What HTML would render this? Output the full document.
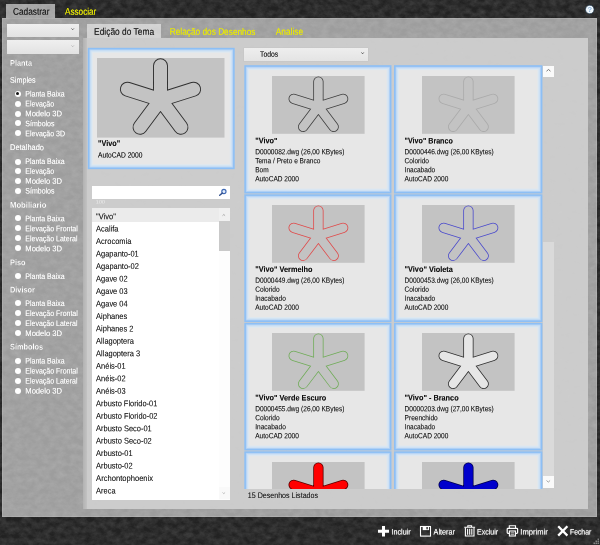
<!DOCTYPE html>
<html lang="pt-BR"><head><meta charset="utf-8"><title>Cadastrar</title>
<style>
html,body{margin:0;padding:0;background:#2b2b2b;}
#root{opacity:.999;position:relative;width:600px;height:545px;overflow:hidden;background:#2b2b2b;font-family:"Liberation Sans", sans-serif;}
#root div,#root svg,#root span.t{position:absolute;}
#root span.t{left:0;top:0;white-space:pre;display:block;transform-origin:0 0;text-shadow:0 0 .5px rgba(0,0,0,.4);}
#root svg{overflow:visible;}
</style></head><body>
<div id="root">
<svg style="left:0;top:0" width="600" height="545"><filter id="tx" x="0" y="0" width="100%" height="100%" color-interpolation-filters="sRGB"><feTurbulence type="fractalNoise" baseFrequency="0.14 0.18" numOctaves="5" seed="7"/><feColorMatrix type="matrix" values="0 0 0 0 0.27  0 0 0 0 0.27  0 0 0 0 0.27  1.3 0 0 0 -0.33"/></filter><rect width="600" height="545" fill="#222"/><rect width="600" height="545" filter="url(#tx)"/></svg>
<div style="left:2px;top:17.5px;width:595.3px;height:499px;background:rgba(255,255,255,0.555);box-shadow:inset 0 0 0 1px rgba(255,255,255,.12)"></div>
<div style="left:5.5px;top:4px;width:49px;height:13.5px;background:rgba(255,255,255,0.58);"></div>
<span class="t" style="font-size:9.6px;line-height:12.5px;color:#1a1a1a;transform:translate(13.00px,5.72px) scaleX(0.866) rotate(.05deg);text-shadow:0 0 .5px rgba(0,0,0,.5);">Cadastrar</span>
<span class="t" style="font-size:9.6px;line-height:12.5px;color:#eded00;transform:translate(65.00px,5.62px) scaleX(0.851) rotate(.05deg);text-shadow:0 0 .6px rgba(240,240,0,.6);">Associar</span>
<svg style="left:584px;top:4px" width="12" height="12" viewBox="0 0 12 12"><circle cx="5.75" cy="5.5" r="4.3" fill="#eef6fc" stroke="#1d3348" stroke-width=".7"/><text x="5.75" y="8.3" font-size="7.5" font-weight="700" text-anchor="middle" fill="#8fb4d8" font-family='"Liberation Sans", sans-serif'>?</text></svg>
<div style="left:7px;top:23.5px;width:71.8px;height:13.5px;background:linear-gradient(#efefef,#e2e2e2);"></div>
<svg style="left:71px;top:28.3px" width="3.4" height="2.2" viewBox="0 0 3.4 2.2"><path d="M0.5 0.5L1.7 1.7000000000000002L2.9 0.5" fill="none" stroke="#555" stroke-width="0.9"/></svg>
<div style="left:7px;top:39.8px;width:71.8px;height:14.2px;background:linear-gradient(#efefef,#e2e2e2);"></div>
<svg style="left:71px;top:45px" width="3.4" height="2.2" viewBox="0 0 3.4 2.2"><path d="M0.5 0.5L1.7 1.7000000000000002L2.9 0.5" fill="none" stroke="#b4b4b4" stroke-width="0.9"/></svg>
<span class="t" style="font-size:8.2px;line-height:10.7px;color:#fff;font-weight:700;transform:translate(10.00px,58.70px) scaleX(0.895) rotate(.05deg);">Planta</span>
<span class="t" style="font-size:8.2px;line-height:10.7px;color:#fff;transform:translate(10.00px,75.70px) scaleX(0.879) rotate(.05deg);text-shadow:0 0 .6px rgba(255,255,255,.55);">Simples</span>
<div style="left:14.6px;top:90.6px;width:6px;height:6px;border-radius:50%;background:#fff"></div>
<div style="left:16.1px;top:92.1px;width:3px;height:3px;border-radius:50%;background:#111"></div>
<span class="t" style="font-size:8.0px;line-height:10.4px;color:#fff;transform:translate(25.30px,89.42px) scaleX(0.875) rotate(.05deg);text-shadow:0 0 .6px rgba(255,255,255,.55);">Planta Baixa</span>
<div style="left:14.6px;top:100.5px;width:6px;height:6px;border-radius:50%;background:#fff"></div>
<span class="t" style="font-size:8.0px;line-height:10.4px;color:#fff;transform:translate(25.30px,99.37px) scaleX(0.875) rotate(.05deg);text-shadow:0 0 .6px rgba(255,255,255,.55);">Elevação</span>
<div style="left:14.6px;top:110.5px;width:6px;height:6px;border-radius:50%;background:#fff"></div>
<span class="t" style="font-size:8.0px;line-height:10.4px;color:#fff;transform:translate(25.30px,109.32px) scaleX(0.951) rotate(.05deg);text-shadow:0 0 .6px rgba(255,255,255,.55);">Modelo 3D</span>
<div style="left:14.6px;top:120.4px;width:6px;height:6px;border-radius:50%;background:#fff"></div>
<span class="t" style="font-size:8.0px;line-height:10.4px;color:#fff;transform:translate(25.30px,119.27px) scaleX(0.875) rotate(.05deg);text-shadow:0 0 .6px rgba(255,255,255,.55);">Símbolos</span>
<div style="left:14.6px;top:130.4px;width:6px;height:6px;border-radius:50%;background:#fff"></div>
<span class="t" style="font-size:8.0px;line-height:10.4px;color:#fff;transform:translate(25.30px,129.22px) scaleX(0.875) rotate(.05deg);text-shadow:0 0 .6px rgba(255,255,255,.55);">Elevação 3D</span>
<span class="t" style="font-size:8.2px;line-height:10.7px;color:#fff;transform:translate(10.00px,143.10px) scaleX(0.911) rotate(.05deg);text-shadow:0 0 .6px rgba(255,255,255,.55);">Detalhado</span>
<div style="left:14.6px;top:158.5px;width:6px;height:6px;border-radius:50%;background:#fff"></div>
<span class="t" style="font-size:8.0px;line-height:10.4px;color:#fff;transform:translate(25.30px,156.92px) scaleX(0.875) rotate(.05deg);text-shadow:0 0 .6px rgba(255,255,255,.55);">Planta Baixa</span>
<div style="left:14.6px;top:168.3px;width:6px;height:6px;border-radius:50%;background:#fff"></div>
<span class="t" style="font-size:8.0px;line-height:10.4px;color:#fff;transform:translate(25.30px,166.77px) scaleX(0.875) rotate(.05deg);text-shadow:0 0 .6px rgba(255,255,255,.55);">Elevação</span>
<div style="left:14.6px;top:178.2px;width:6px;height:6px;border-radius:50%;background:#fff"></div>
<span class="t" style="font-size:8.0px;line-height:10.4px;color:#fff;transform:translate(25.30px,176.62px) scaleX(0.951) rotate(.05deg);text-shadow:0 0 .6px rgba(255,255,255,.55);">Modelo 3D</span>
<div style="left:14.6px;top:188.1px;width:6px;height:6px;border-radius:50%;background:#fff"></div>
<span class="t" style="font-size:8.0px;line-height:10.4px;color:#fff;transform:translate(25.30px,186.47px) scaleX(0.875) rotate(.05deg);text-shadow:0 0 .6px rgba(255,255,255,.55);">Símbolos</span>
<span class="t" style="font-size:8.2px;line-height:10.7px;color:#fff;font-weight:700;transform:translate(10.00px,200.80px) scaleX(0.941) rotate(.05deg);">Mobiliario</span>
<div style="left:14.6px;top:215.4px;width:6px;height:6px;border-radius:50%;background:#fff"></div>
<span class="t" style="font-size:8.0px;line-height:10.4px;color:#fff;transform:translate(25.30px,214.22px) scaleX(0.875) rotate(.05deg);text-shadow:0 0 .6px rgba(255,255,255,.55);">Planta Baixa</span>
<div style="left:14.6px;top:225.4px;width:6px;height:6px;border-radius:50%;background:#fff"></div>
<span class="t" style="font-size:8.0px;line-height:10.4px;color:#fff;transform:translate(25.30px,224.22px) scaleX(0.875) rotate(.05deg);text-shadow:0 0 .6px rgba(255,255,255,.55);">Elevação Frontal</span>
<div style="left:14.6px;top:235.4px;width:6px;height:6px;border-radius:50%;background:#fff"></div>
<span class="t" style="font-size:8.0px;line-height:10.4px;color:#fff;transform:translate(25.30px,234.22px) scaleX(0.875) rotate(.05deg);text-shadow:0 0 .6px rgba(255,255,255,.55);">Elevação Lateral</span>
<div style="left:14.6px;top:245.4px;width:6px;height:6px;border-radius:50%;background:#fff"></div>
<span class="t" style="font-size:8.0px;line-height:10.4px;color:#fff;transform:translate(25.30px,244.22px) scaleX(0.951) rotate(.05deg);text-shadow:0 0 .6px rgba(255,255,255,.55);">Modelo 3D</span>
<span class="t" style="font-size:8.2px;line-height:10.7px;color:#fff;font-weight:700;transform:translate(10.00px,258.20px) scaleX(0.900) rotate(.05deg);">Piso</span>
<div style="left:14.6px;top:273.2px;width:6px;height:6px;border-radius:50%;background:#fff"></div>
<span class="t" style="font-size:8.0px;line-height:10.4px;color:#fff;transform:translate(25.30px,272.02px) scaleX(0.875) rotate(.05deg);text-shadow:0 0 .6px rgba(255,255,255,.55);">Planta Baixa</span>
<span class="t" style="font-size:8.2px;line-height:10.7px;color:#fff;font-weight:700;transform:translate(10.00px,285.60px) scaleX(0.900) rotate(.05deg);">Divisor</span>
<div style="left:14.6px;top:300.2px;width:6px;height:6px;border-radius:50%;background:#fff"></div>
<span class="t" style="font-size:8.0px;line-height:10.4px;color:#fff;transform:translate(25.30px,299.02px) scaleX(0.875) rotate(.05deg);text-shadow:0 0 .6px rgba(255,255,255,.55);">Planta Baixa</span>
<div style="left:14.6px;top:310.2px;width:6px;height:6px;border-radius:50%;background:#fff"></div>
<span class="t" style="font-size:8.0px;line-height:10.4px;color:#fff;transform:translate(25.30px,309.02px) scaleX(0.875) rotate(.05deg);text-shadow:0 0 .6px rgba(255,255,255,.55);">Elevação Frontal</span>
<div style="left:14.6px;top:320.2px;width:6px;height:6px;border-radius:50%;background:#fff"></div>
<span class="t" style="font-size:8.0px;line-height:10.4px;color:#fff;transform:translate(25.30px,319.02px) scaleX(0.875) rotate(.05deg);text-shadow:0 0 .6px rgba(255,255,255,.55);">Elevação Lateral</span>
<div style="left:14.6px;top:330.2px;width:6px;height:6px;border-radius:50%;background:#fff"></div>
<span class="t" style="font-size:8.0px;line-height:10.4px;color:#fff;transform:translate(25.30px,329.02px) scaleX(0.951) rotate(.05deg);text-shadow:0 0 .6px rgba(255,255,255,.55);">Modelo 3D</span>
<span class="t" style="font-size:8.2px;line-height:10.7px;color:#fff;font-weight:700;transform:translate(10.00px,342.60px) scaleX(0.900) rotate(.05deg);">Símbolos</span>
<div style="left:14.6px;top:357.7px;width:6px;height:6px;border-radius:50%;background:#fff"></div>
<span class="t" style="font-size:8.0px;line-height:10.4px;color:#fff;transform:translate(25.30px,356.52px) scaleX(0.875) rotate(.05deg);text-shadow:0 0 .6px rgba(255,255,255,.55);">Planta Baixa</span>
<div style="left:14.6px;top:367.7px;width:6px;height:6px;border-radius:50%;background:#fff"></div>
<span class="t" style="font-size:8.0px;line-height:10.4px;color:#fff;transform:translate(25.30px,366.52px) scaleX(0.875) rotate(.05deg);text-shadow:0 0 .6px rgba(255,255,255,.55);">Elevação Frontal</span>
<div style="left:14.6px;top:377.7px;width:6px;height:6px;border-radius:50%;background:#fff"></div>
<span class="t" style="font-size:8.0px;line-height:10.4px;color:#fff;transform:translate(25.30px,376.52px) scaleX(0.875) rotate(.05deg);text-shadow:0 0 .6px rgba(255,255,255,.55);">Elevação Lateral</span>
<div style="left:14.6px;top:387.7px;width:6px;height:6px;border-radius:50%;background:#fff"></div>
<span class="t" style="font-size:8.0px;line-height:10.4px;color:#fff;transform:translate(25.30px,386.52px) scaleX(0.951) rotate(.05deg);text-shadow:0 0 .6px rgba(255,255,255,.55);">Modelo 3D</span>
<div style="left:82.7px;top:37.8px;width:505.5px;height:471.5px;background:rgba(208,208,208,0.9);"></div>
<div style="left:82.7px;top:37.8px;width:4.3px;height:471.5px;background:linear-gradient(90deg,rgba(0,0,0,.13),rgba(0,0,0,.05));"></div>
<div style="left:86.5px;top:24px;width:74px;height:14px;background:rgba(255,255,255,0.52);"></div>
<span class="t" style="font-size:9.6px;line-height:12.5px;color:#1a1a1a;transform:translate(94.10px,25.82px) scaleX(0.874) rotate(.05deg);text-shadow:0 0 .5px rgba(0,0,0,.45);">Edição do Tema</span>
<span class="t" style="font-size:9.6px;line-height:12.5px;color:#eaea00;transform:translate(169.70px,25.82px) scaleX(0.865) rotate(.05deg);text-shadow:0 0 .6px rgba(235,235,0,.6);">Relação dos Desenhos</span>
<span class="t" style="font-size:9.6px;line-height:12.5px;color:#eaea00;transform:translate(275.80px,25.82px) scaleX(0.868) rotate(.05deg);text-shadow:0 0 .6px rgba(235,235,0,.6);">Analise</span>
<svg style="left:0;top:0" width="1" height="1"><rect x="87.80" y="47.80" width="146.90" height="121.40" fill="#8dbff5"/><rect x="89.40" y="49.40" width="143.70" height="118.20" fill="#b3d2f5"/><rect x="90.30" y="50.30" width="141.90" height="116.40" fill="#cfe1f4"/><rect x="91.60" y="51.60" width="139.30" height="113.80" fill="#dde8f1"/><rect x="92.70" y="52.70" width="137.10" height="111.60" fill="#e7e7e7"/></svg>
<svg style="left:97.1px;top:58.2px" width="127.5" height="79.6" viewBox="0 0 127.5 79.6"><rect width="127.5" height="79.6" fill="#c3c3c3"/><path d="M63.50 41.75L63.50 7.75M63.50 41.75L96.61 31.24M63.50 41.75L83.96 69.26M63.50 41.75L43.04 69.26M63.50 41.75L30.39 31.24" stroke="#303030" stroke-width="14.95" stroke-linecap="round" fill="none"/><path d="M63.50 41.75L63.50 7.75M63.50 41.75L96.61 31.24M63.50 41.75L83.96 69.26M63.50 41.75L43.04 69.26M63.50 41.75L30.39 31.24" stroke="#c3c3c3" stroke-width="13.05" stroke-linecap="round" fill="none"/></svg>
<span class="t" style="font-size:8.2px;line-height:10.7px;color:#111;font-weight:700;transform:translate(98.00px,138.90px) scaleX(0.887) rotate(.05deg);">"Vivo"</span>
<span class="t" style="font-size:7.6px;line-height:9.9px;color:#111;transform:translate(98.00px,150.57px) scaleX(0.878) rotate(.05deg);">AutoCAD 2000</span>
<div style="left:92px;top:186px;width:138px;height:13px;background:#fff;"></div>
<svg style="left:217.5px;top:187px" width="10" height="10" viewBox="0 0 10 10"><circle cx="5.9" cy="4.5" r="2.1" fill="#e4eefb" stroke="#3e68b4" stroke-width="1.15"/><path d="M4.3 6.1L1.7 8.2" stroke="#34528f" stroke-width="1.4" stroke-linecap="round"/></svg>
<span class="t" style="font-size:4.8px;line-height:6.2px;color:#ececec;transform:translate(95.80px,199.51px) scaleX(1.160) rotate(.05deg);text-shadow:none;">100</span>
<div style="left:92px;top:208px;width:138px;height:292px;background:#fff;overflow:hidden">
<div style="left:0;top:0;width:138px;height:13.6px;background:#ebebeb"></div>
<span class="t" style="font-size:8.3px;line-height:10.8px;color:#1c1c1c;transform:translate(4.10px,3.13px) scaleX(0.900) rotate(.05deg);">"Vivo"</span>
<span class="t" style="font-size:8.3px;line-height:10.8px;color:#1c1c1c;transform:translate(4.10px,15.60px) scaleX(0.900) rotate(.05deg);">Acalifa</span>
<span class="t" style="font-size:8.3px;line-height:10.8px;color:#1c1c1c;transform:translate(4.10px,28.07px) scaleX(0.900) rotate(.05deg);">Acrocomia</span>
<span class="t" style="font-size:8.3px;line-height:10.8px;color:#1c1c1c;transform:translate(4.10px,40.54px) scaleX(0.898) rotate(.05deg);">Agapanto-01</span>
<span class="t" style="font-size:8.3px;line-height:10.8px;color:#1c1c1c;transform:translate(4.10px,53.01px) scaleX(0.900) rotate(.05deg);">Agapanto-02</span>
<span class="t" style="font-size:8.3px;line-height:10.8px;color:#1c1c1c;transform:translate(4.10px,65.48px) scaleX(0.900) rotate(.05deg);">Agave 02</span>
<span class="t" style="font-size:8.3px;line-height:10.8px;color:#1c1c1c;transform:translate(4.10px,77.95px) scaleX(0.900) rotate(.05deg);">Agave 03</span>
<span class="t" style="font-size:8.3px;line-height:10.8px;color:#1c1c1c;transform:translate(4.10px,90.42px) scaleX(0.900) rotate(.05deg);">Agave 04</span>
<span class="t" style="font-size:8.3px;line-height:10.8px;color:#1c1c1c;transform:translate(4.10px,102.89px) scaleX(0.900) rotate(.05deg);">Aiphanes</span>
<span class="t" style="font-size:8.3px;line-height:10.8px;color:#1c1c1c;transform:translate(4.10px,115.36px) scaleX(0.900) rotate(.05deg);">Aiphanes 2</span>
<span class="t" style="font-size:8.3px;line-height:10.8px;color:#1c1c1c;transform:translate(4.10px,127.83px) scaleX(0.900) rotate(.05deg);">Allagoptera</span>
<span class="t" style="font-size:8.3px;line-height:10.8px;color:#1c1c1c;transform:translate(4.10px,140.30px) scaleX(0.900) rotate(.05deg);">Allagoptera 3</span>
<span class="t" style="font-size:8.3px;line-height:10.8px;color:#1c1c1c;transform:translate(4.10px,152.77px) scaleX(0.900) rotate(.05deg);">Anéis-01</span>
<span class="t" style="font-size:8.3px;line-height:10.8px;color:#1c1c1c;transform:translate(4.10px,165.24px) scaleX(0.900) rotate(.05deg);">Anéis-02</span>
<span class="t" style="font-size:8.3px;line-height:10.8px;color:#1c1c1c;transform:translate(4.10px,177.71px) scaleX(0.900) rotate(.05deg);">Anéis-03</span>
<span class="t" style="font-size:8.3px;line-height:10.8px;color:#1c1c1c;transform:translate(4.10px,190.18px) scaleX(0.898) rotate(.05deg);">Arbusto Florido-01</span>
<span class="t" style="font-size:8.3px;line-height:10.8px;color:#1c1c1c;transform:translate(4.10px,202.65px) scaleX(0.900) rotate(.05deg);">Arbusto Florido-02</span>
<span class="t" style="font-size:8.3px;line-height:10.8px;color:#1c1c1c;transform:translate(4.10px,215.12px) scaleX(0.900) rotate(.05deg);">Arbusto Seco-01</span>
<span class="t" style="font-size:8.3px;line-height:10.8px;color:#1c1c1c;transform:translate(4.10px,227.59px) scaleX(0.900) rotate(.05deg);">Arbusto Seco-02</span>
<span class="t" style="font-size:8.3px;line-height:10.8px;color:#1c1c1c;transform:translate(4.10px,240.06px) scaleX(0.900) rotate(.05deg);">Arbusto-01</span>
<span class="t" style="font-size:8.3px;line-height:10.8px;color:#1c1c1c;transform:translate(4.10px,252.53px) scaleX(0.900) rotate(.05deg);">Arbusto-02</span>
<span class="t" style="font-size:8.3px;line-height:10.8px;color:#1c1c1c;transform:translate(4.10px,265.00px) scaleX(0.915) rotate(.05deg);">Archontophoenix</span>
<span class="t" style="font-size:8.3px;line-height:10.8px;color:#1c1c1c;transform:translate(4.10px,277.47px) scaleX(0.900) rotate(.05deg);">Areca</span>
<span class="t" style="font-size:8.3px;line-height:10.8px;color:#1c1c1c;transform:translate(4.10px,289.94px) scaleX(0.900) rotate(.05deg);">Areca Bambu</span>
<div style="left:126.8px;top:0;width:11.2px;height:292px;background:#fdfdfd"></div>
<div style="left:126.8px;top:0;width:11.2px;height:13px;background:#f0f0f0"></div>
<svg style="left:130.4px;top:5.6px" width="3.6" height="2.2" viewBox="0 0 3.6 2.2"><path d="M0.5 1.7000000000000002L1.8 0.5L3.1 1.7000000000000002" fill="none" stroke="#9a9a9a" stroke-width="0.8"/></svg>
<div style="left:126.8px;top:13px;width:10.8px;height:29.6px;background:#c9c9c9"></div>
<div style="left:126.8px;top:279px;width:11.2px;height:12px;background:#f9f9f9"></div>
<svg style="left:130.4px;top:284.4px" width="3.6" height="2.2" viewBox="0 0 3.6 2.2"><path d="M0.5 0.5L1.8 1.7000000000000002L3.1 0.5" fill="none" stroke="#b0b0b0" stroke-width="0.8"/></svg>
</div>
<div style="left:244px;top:47.5px;width:123.8px;height:13.6px;background:linear-gradient(#eeeeee,#e4e4e4);box-shadow:0 0 0 0.5px #c4c4c4"></div>
<span class="t" style="font-size:7.8px;line-height:10.1px;color:#111;transform:translate(260.10px,49.84px) scaleX(0.870) rotate(.05deg);">Todos</span>
<svg style="left:360.8px;top:52.4px" width="3.2" height="2.3" viewBox="0 0 3.2 2.3"><path d="M0.5 0.5L1.6 1.7999999999999998L2.7 0.5" fill="none" stroke="#555" stroke-width="1.0"/></svg>
<div style="left:244px;top:65px;width:299px;height:423.6px;overflow:hidden">
<svg style="left:0;top:0" width="1" height="1"><rect x="0.30" y="0.20" width="147.20" height="128.30" fill="#8dbff5"/><rect x="1.90" y="1.80" width="144.00" height="125.10" fill="#b3d2f5"/><rect x="2.80" y="2.70" width="142.20" height="123.30" fill="#cfe1f4"/><rect x="4.10" y="4.00" width="139.60" height="120.70" fill="#dde8f1"/><rect x="5.20" y="5.10" width="137.40" height="118.50" fill="#e7e7e7"/></svg>
<svg style="left:28.1px;top:11.4px" width="92.6" height="57.8" viewBox="0 0 92.6 57.8"><rect width="92.6" height="57.8" fill="#c3c3c3"/><path d="M46.40 30.55L46.40 5.55M46.40 30.55L71.13 22.82M46.40 30.55L61.68 50.78M46.40 30.55L31.12 50.78M46.40 30.55L21.67 22.82" stroke="#404040" stroke-width="10.30" stroke-linecap="round" fill="none"/><path d="M46.40 30.55L46.40 5.55M46.40 30.55L71.13 22.82M46.40 30.55L61.68 50.78M46.40 30.55L31.12 50.78M46.40 30.55L21.67 22.82" stroke="#c3c3c3" stroke-width="8.70" stroke-linecap="round" fill="none"/></svg>
<span class="t" style="font-size:8.1px;line-height:10.5px;color:#111;font-weight:700;transform:translate(11.20px,71.36px) scaleX(0.905) rotate(.05deg);">"Vivo"</span>
<span class="t" style="font-size:7.5px;line-height:9.8px;color:#1a1a1a;transform:translate(11.20px,82.13px) scaleX(0.873) rotate(.05deg);">D0000082.dwg (26,00 KBytes)</span>
<span class="t" style="font-size:7.5px;line-height:9.8px;color:#1a1a1a;transform:translate(11.20px,91.13px) scaleX(0.873) rotate(.05deg);">Tema / Preto e Branco</span>
<span class="t" style="font-size:7.5px;line-height:9.8px;color:#1a1a1a;transform:translate(11.20px,100.13px) scaleX(0.873) rotate(.05deg);">Bom</span>
<span class="t" style="font-size:7.5px;line-height:9.8px;color:#1a1a1a;transform:translate(11.20px,109.13px) scaleX(0.873) rotate(.05deg);">AutoCAD 2000</span>
<svg style="left:0;top:0" width="1" height="1"><rect x="150.00" y="0.20" width="148.40" height="128.30" fill="#8dbff5"/><rect x="151.60" y="1.80" width="145.20" height="125.10" fill="#b3d2f5"/><rect x="152.50" y="2.70" width="143.40" height="123.30" fill="#cfe1f4"/><rect x="153.80" y="4.00" width="140.80" height="120.70" fill="#dde8f1"/><rect x="154.90" y="5.10" width="138.60" height="118.50" fill="#e7e7e7"/></svg>
<svg style="left:177.5px;top:11.4px" width="92.6" height="57.8" viewBox="0 0 92.6 57.8"><rect width="92.6" height="57.8" fill="#c3c3c3"/><path d="M46.40 30.55L46.40 5.55M46.40 30.55L71.13 22.82M46.40 30.55L61.68 50.78M46.40 30.55L31.12 50.78M46.40 30.55L21.67 22.82" stroke="#ababab" stroke-width="10.35" stroke-linecap="round" fill="none"/><path d="M46.40 30.55L46.40 5.55M46.40 30.55L71.13 22.82M46.40 30.55L61.68 50.78M46.40 30.55L31.12 50.78M46.40 30.55L21.67 22.82" stroke="#c3c3c3" stroke-width="8.65" stroke-linecap="round" fill="none"/></svg>
<span class="t" style="font-size:8.1px;line-height:10.5px;color:#111;font-weight:700;transform:translate(160.60px,71.36px) scaleX(0.880) rotate(.05deg);">"Vivo" Branco</span>
<span class="t" style="font-size:7.5px;line-height:9.8px;color:#1a1a1a;transform:translate(160.60px,82.13px) scaleX(0.873) rotate(.05deg);">D0000446.dwg (26,00 KBytes)</span>
<span class="t" style="font-size:7.5px;line-height:9.8px;color:#1a1a1a;transform:translate(160.60px,91.13px) scaleX(0.873) rotate(.05deg);">Colorido</span>
<span class="t" style="font-size:7.5px;line-height:9.8px;color:#1a1a1a;transform:translate(160.60px,100.13px) scaleX(0.873) rotate(.05deg);">Inacabado</span>
<span class="t" style="font-size:7.5px;line-height:9.8px;color:#1a1a1a;transform:translate(160.60px,109.13px) scaleX(0.873) rotate(.05deg);">AutoCAD 2000</span>
<svg style="left:0;top:0" width="1" height="1"><rect x="0.30" y="129.30" width="147.20" height="127.70" fill="#8dbff5"/><rect x="1.90" y="130.90" width="144.00" height="124.50" fill="#b3d2f5"/><rect x="2.80" y="131.80" width="142.20" height="122.70" fill="#cfe1f4"/><rect x="4.10" y="133.10" width="139.60" height="120.10" fill="#dde8f1"/><rect x="5.20" y="134.20" width="137.40" height="117.90" fill="#e7e7e7"/></svg>
<svg style="left:28.1px;top:139.9px" width="92.6" height="57.8" viewBox="0 0 92.6 57.8"><rect width="92.6" height="57.8" fill="#c3c3c3"/><path d="M46.40 30.55L46.40 5.55M46.40 30.55L71.13 22.82M46.40 30.55L61.68 50.78M46.40 30.55L31.12 50.78M46.40 30.55L21.67 22.82" stroke="#e04a4a" stroke-width="10.28" stroke-linecap="round" fill="none"/><path d="M46.40 30.55L46.40 5.55M46.40 30.55L71.13 22.82M46.40 30.55L61.68 50.78M46.40 30.55L31.12 50.78M46.40 30.55L21.67 22.82" stroke="#c3c3c3" stroke-width="8.72" stroke-linecap="round" fill="none"/></svg>
<span class="t" style="font-size:8.1px;line-height:10.5px;color:#111;font-weight:700;transform:translate(11.20px,199.86px) scaleX(0.905) rotate(.05deg);">"Vivo" Vermelho</span>
<span class="t" style="font-size:7.5px;line-height:9.8px;color:#1a1a1a;transform:translate(11.20px,210.63px) scaleX(0.873) rotate(.05deg);">D0000449.dwg (26,00 KBytes)</span>
<span class="t" style="font-size:7.5px;line-height:9.8px;color:#1a1a1a;transform:translate(11.20px,219.63px) scaleX(0.873) rotate(.05deg);">Colorido</span>
<span class="t" style="font-size:7.5px;line-height:9.8px;color:#1a1a1a;transform:translate(11.20px,228.63px) scaleX(0.873) rotate(.05deg);">Inacabado</span>
<span class="t" style="font-size:7.5px;line-height:9.8px;color:#1a1a1a;transform:translate(11.20px,237.63px) scaleX(0.873) rotate(.05deg);">AutoCAD 2000</span>
<svg style="left:0;top:0" width="1" height="1"><rect x="150.00" y="129.30" width="148.40" height="127.70" fill="#8dbff5"/><rect x="151.60" y="130.90" width="145.20" height="124.50" fill="#b3d2f5"/><rect x="152.50" y="131.80" width="143.40" height="122.70" fill="#cfe1f4"/><rect x="153.80" y="133.10" width="140.80" height="120.10" fill="#dde8f1"/><rect x="154.90" y="134.20" width="138.60" height="117.90" fill="#e7e7e7"/></svg>
<svg style="left:177.5px;top:139.9px" width="92.6" height="57.8" viewBox="0 0 92.6 57.8"><rect width="92.6" height="57.8" fill="#c3c3c3"/><path d="M46.40 30.55L46.40 5.55M46.40 30.55L71.13 22.82M46.40 30.55L61.68 50.78M46.40 30.55L31.12 50.78M46.40 30.55L21.67 22.82" stroke="#4a4acc" stroke-width="10.28" stroke-linecap="round" fill="none"/><path d="M46.40 30.55L46.40 5.55M46.40 30.55L71.13 22.82M46.40 30.55L61.68 50.78M46.40 30.55L31.12 50.78M46.40 30.55L21.67 22.82" stroke="#c3c3c3" stroke-width="8.72" stroke-linecap="round" fill="none"/></svg>
<span class="t" style="font-size:8.1px;line-height:10.5px;color:#111;font-weight:700;transform:translate(160.60px,199.86px) scaleX(0.905) rotate(.05deg);">"Vivo" Violeta</span>
<span class="t" style="font-size:7.5px;line-height:9.8px;color:#1a1a1a;transform:translate(160.60px,210.63px) scaleX(0.873) rotate(.05deg);">D0000453.dwg (26,00 KBytes)</span>
<span class="t" style="font-size:7.5px;line-height:9.8px;color:#1a1a1a;transform:translate(160.60px,219.63px) scaleX(0.873) rotate(.05deg);">Colorido</span>
<span class="t" style="font-size:7.5px;line-height:9.8px;color:#1a1a1a;transform:translate(160.60px,228.63px) scaleX(0.873) rotate(.05deg);">Inacabado</span>
<span class="t" style="font-size:7.5px;line-height:9.8px;color:#1a1a1a;transform:translate(160.60px,237.63px) scaleX(0.873) rotate(.05deg);">AutoCAD 2000</span>
<svg style="left:0;top:0" width="1" height="1"><rect x="0.30" y="257.80" width="147.20" height="127.70" fill="#8dbff5"/><rect x="1.90" y="259.40" width="144.00" height="124.50" fill="#b3d2f5"/><rect x="2.80" y="260.30" width="142.20" height="122.70" fill="#cfe1f4"/><rect x="4.10" y="261.60" width="139.60" height="120.10" fill="#dde8f1"/><rect x="5.20" y="262.70" width="137.40" height="117.90" fill="#e7e7e7"/></svg>
<svg style="left:28.1px;top:268.4px" width="92.6" height="57.8" viewBox="0 0 92.6 57.8"><rect width="92.6" height="57.8" fill="#c3c3c3"/><path d="M46.40 30.55L46.40 5.55M46.40 30.55L71.13 22.82M46.40 30.55L61.68 50.78M46.40 30.55L31.12 50.78M46.40 30.55L21.67 22.82" stroke="#70ac58" stroke-width="10.28" stroke-linecap="round" fill="none"/><path d="M46.40 30.55L46.40 5.55M46.40 30.55L71.13 22.82M46.40 30.55L61.68 50.78M46.40 30.55L31.12 50.78M46.40 30.55L21.67 22.82" stroke="#c3c3c3" stroke-width="8.72" stroke-linecap="round" fill="none"/></svg>
<span class="t" style="font-size:8.1px;line-height:10.5px;color:#111;font-weight:700;transform:translate(11.20px,328.36px) scaleX(0.905) rotate(.05deg);">"Vivo" Verde Escuro</span>
<span class="t" style="font-size:7.5px;line-height:9.8px;color:#1a1a1a;transform:translate(11.20px,339.13px) scaleX(0.873) rotate(.05deg);">D0000455.dwg (26,00 KBytes)</span>
<span class="t" style="font-size:7.5px;line-height:9.8px;color:#1a1a1a;transform:translate(11.20px,348.13px) scaleX(0.873) rotate(.05deg);">Colorido</span>
<span class="t" style="font-size:7.5px;line-height:9.8px;color:#1a1a1a;transform:translate(11.20px,357.13px) scaleX(0.873) rotate(.05deg);">Inacabado</span>
<span class="t" style="font-size:7.5px;line-height:9.8px;color:#1a1a1a;transform:translate(11.20px,366.13px) scaleX(0.873) rotate(.05deg);">AutoCAD 2000</span>
<svg style="left:0;top:0" width="1" height="1"><rect x="150.00" y="257.80" width="148.40" height="127.70" fill="#8dbff5"/><rect x="151.60" y="259.40" width="145.20" height="124.50" fill="#b3d2f5"/><rect x="152.50" y="260.30" width="143.40" height="122.70" fill="#cfe1f4"/><rect x="153.80" y="261.60" width="140.80" height="120.10" fill="#dde8f1"/><rect x="154.90" y="262.70" width="138.60" height="117.90" fill="#e7e7e7"/></svg>
<svg style="left:177.5px;top:268.4px" width="92.6" height="57.8" viewBox="0 0 92.6 57.8"><rect width="92.6" height="57.8" fill="#c3c3c3"/><path d="M46.40 30.55L46.40 5.55M46.40 30.55L71.13 22.82M46.40 30.55L61.68 50.78M46.40 30.55L31.12 50.78M46.40 30.55L21.67 22.82" stroke="#303030" stroke-width="10.30" stroke-linecap="round" fill="none"/><path d="M46.40 30.55L46.40 5.55M46.40 30.55L71.13 22.82M46.40 30.55L61.68 50.78M46.40 30.55L31.12 50.78M46.40 30.55L21.67 22.82" stroke="#e6e6e6" stroke-width="8.70" stroke-linecap="round" fill="none"/></svg>
<span class="t" style="font-size:8.1px;line-height:10.5px;color:#111;font-weight:700;transform:translate(160.60px,328.36px) scaleX(0.905) rotate(.05deg);">"Vivo" - Branco</span>
<span class="t" style="font-size:7.5px;line-height:9.8px;color:#1a1a1a;transform:translate(160.60px,339.13px) scaleX(0.873) rotate(.05deg);">D0000203.dwg (27,00 KBytes)</span>
<span class="t" style="font-size:7.5px;line-height:9.8px;color:#1a1a1a;transform:translate(160.60px,348.13px) scaleX(0.873) rotate(.05deg);">Preenchido</span>
<span class="t" style="font-size:7.5px;line-height:9.8px;color:#1a1a1a;transform:translate(160.60px,357.13px) scaleX(0.873) rotate(.05deg);">Inacabado</span>
<span class="t" style="font-size:7.5px;line-height:9.8px;color:#1a1a1a;transform:translate(160.60px,366.13px) scaleX(0.873) rotate(.05deg);">AutoCAD 2000</span>
<svg style="left:0;top:0" width="1" height="1"><rect x="0.30" y="386.30" width="147.20" height="127.70" fill="#8dbff5"/><rect x="1.90" y="387.90" width="144.00" height="124.50" fill="#b3d2f5"/><rect x="2.80" y="388.80" width="142.20" height="122.70" fill="#cfe1f4"/><rect x="4.10" y="390.10" width="139.60" height="120.10" fill="#dde8f1"/><rect x="5.20" y="391.20" width="137.40" height="117.90" fill="#e7e7e7"/></svg>
<svg style="left:28.1px;top:396.9px" width="92.6" height="57.8" viewBox="0 0 92.6 57.8"><rect width="92.6" height="57.8" fill="#c3c3c3"/><path d="M46.40 30.55L46.40 5.55M46.40 30.55L71.13 22.82M46.40 30.55L61.68 50.78M46.40 30.55L31.12 50.78M46.40 30.55L21.67 22.82" stroke="#5a0000" stroke-width="10.30" stroke-linecap="round" fill="none"/><path d="M46.40 30.55L46.40 5.55M46.40 30.55L71.13 22.82M46.40 30.55L61.68 50.78M46.40 30.55L31.12 50.78M46.40 30.55L21.67 22.82" stroke="#ff0000" stroke-width="8.70" stroke-linecap="round" fill="none"/></svg>
<span class="t" style="font-size:8.1px;line-height:10.5px;color:#111;font-weight:700;transform:translate(11.20px,456.86px) scaleX(0.905) rotate(.05deg);">"Vivo" - Vermelho</span>
<span class="t" style="font-size:7.5px;line-height:9.8px;color:#1a1a1a;transform:translate(11.20px,467.63px) scaleX(0.873) rotate(.05deg);">D0000204.dwg (27,00 KBytes)</span>
<span class="t" style="font-size:7.5px;line-height:9.8px;color:#1a1a1a;transform:translate(11.20px,476.63px) scaleX(0.873) rotate(.05deg);">Preenchido</span>
<span class="t" style="font-size:7.5px;line-height:9.8px;color:#1a1a1a;transform:translate(11.20px,485.63px) scaleX(0.873) rotate(.05deg);">Inacabado</span>
<span class="t" style="font-size:7.5px;line-height:9.8px;color:#1a1a1a;transform:translate(11.20px,494.63px) scaleX(0.873) rotate(.05deg);">AutoCAD 2000</span>
<svg style="left:0;top:0" width="1" height="1"><rect x="150.00" y="386.30" width="148.40" height="127.70" fill="#8dbff5"/><rect x="151.60" y="387.90" width="145.20" height="124.50" fill="#b3d2f5"/><rect x="152.50" y="388.80" width="143.40" height="122.70" fill="#cfe1f4"/><rect x="153.80" y="390.10" width="140.80" height="120.10" fill="#dde8f1"/><rect x="154.90" y="391.20" width="138.60" height="117.90" fill="#e7e7e7"/></svg>
<svg style="left:177.5px;top:396.9px" width="92.6" height="57.8" viewBox="0 0 92.6 57.8"><rect width="92.6" height="57.8" fill="#c3c3c3"/><path d="M46.40 30.55L46.40 5.55M46.40 30.55L71.13 22.82M46.40 30.55L61.68 50.78M46.40 30.55L31.12 50.78M46.40 30.55L21.67 22.82" stroke="#000050" stroke-width="10.30" stroke-linecap="round" fill="none"/><path d="M46.40 30.55L46.40 5.55M46.40 30.55L71.13 22.82M46.40 30.55L61.68 50.78M46.40 30.55L31.12 50.78M46.40 30.55L21.67 22.82" stroke="#0000cc" stroke-width="8.70" stroke-linecap="round" fill="none"/></svg>
<span class="t" style="font-size:8.1px;line-height:10.5px;color:#111;font-weight:700;transform:translate(160.60px,456.86px) scaleX(0.905) rotate(.05deg);">"Vivo" - Azul</span>
<span class="t" style="font-size:7.5px;line-height:9.8px;color:#1a1a1a;transform:translate(160.60px,467.63px) scaleX(0.873) rotate(.05deg);">D0000205.dwg (27,00 KBytes)</span>
<span class="t" style="font-size:7.5px;line-height:9.8px;color:#1a1a1a;transform:translate(160.60px,476.63px) scaleX(0.873) rotate(.05deg);">Preenchido</span>
<span class="t" style="font-size:7.5px;line-height:9.8px;color:#1a1a1a;transform:translate(160.60px,485.63px) scaleX(0.873) rotate(.05deg);">Inacabado</span>
<span class="t" style="font-size:7.5px;line-height:9.8px;color:#1a1a1a;transform:translate(160.60px,494.63px) scaleX(0.873) rotate(.05deg);">AutoCAD 2000</span>
</div>
<div style="left:543px;top:66px;width:10.7px;height:11px;background:#fafafa;"></div>
<svg style="left:545.6px;top:69.3px" width="5" height="2.7" viewBox="0 0 5 2.7"><path d="M0.5 2.2L2.5 0.5L4.5 2.2" fill="none" stroke="#777" stroke-width="1"/></svg>
<div style="left:543px;top:241.5px;width:10.7px;height:234.5px;background:#dadada;"></div>
<div style="left:543px;top:476px;width:10.7px;height:11.6px;background:#fafafa;"></div>
<svg style="left:545.8px;top:480.4px" width="4.6" height="2.6" viewBox="0 0 4.6 2.6"><path d="M0.5 0.5L2.3 2.1L4.1 0.5" fill="none" stroke="#999" stroke-width="0.9"/></svg>
<span class="t" style="font-size:8.0px;line-height:10.4px;color:#222;transform:translate(247.80px,490.92px) scaleX(0.887) rotate(.05deg);">15 Desenhos Listados</span>
<svg style="left:377px;top:524px" width="14" height="14" viewBox="0 0 14 14"><path d="M6.5 2v10.6M1 7.3h11" stroke="#fff" stroke-width="3" fill="none"/></svg>
<span class="t" style="font-size:7.9px;line-height:10.3px;color:#f4f4f4;transform:translate(391.40px,527.58px) scaleX(0.916) rotate(.05deg);text-shadow:0 0 .8px rgba(255,255,255,.85);">Incluir</span>
<svg style="left:419px;top:525px" width="14" height="13" viewBox="0 0 14 13"><rect x="1.5" y="1.5" width="10" height="9.6" fill="none" stroke="#fff" stroke-width="1.1"/><rect x="3.7" y="1.5" width="6.3" height="3.6" fill="#fff"/><rect x="7.4" y="2" width="1.4" height="2.3" fill="#2b2b2b"/></svg>
<span class="t" style="font-size:7.9px;line-height:10.3px;color:#f4f4f4;transform:translate(433.60px,527.58px) scaleX(0.920) rotate(.05deg);text-shadow:0 0 .8px rgba(255,255,255,.85);">Alterar</span>
<svg style="left:463px;top:524px" width="14" height="14" viewBox="0 0 14 14"><path d="M1.3 3.2h10.8M4.8 3V1.7h3.8V3" stroke="#fff" stroke-width="1.1" fill="none"/><path d="M2.4 3.4v8.6h8.6V3.4" stroke="#fff" stroke-width="1.1" fill="none"/><path d="M4.6 4.8v6M6.7 4.8v6M8.8 4.8v6" stroke="#fff" stroke-width="1.1"/></svg>
<span class="t" style="font-size:7.9px;line-height:10.3px;color:#f4f4f4;transform:translate(477.10px,527.58px) scaleX(0.887) rotate(.05deg);text-shadow:0 0 .8px rgba(255,255,255,.85);">Excluir</span>
<svg style="left:506px;top:524px" width="14" height="14" viewBox="0 0 14 14"><path d="M3.3 4.2V1.7h6.2v2.5" stroke="#fff" stroke-width="1.1" fill="none"/><rect x="1.2" y="4.3" width="10.4" height="5" rx="0.8" fill="none" stroke="#fff" stroke-width="1.2"/><rect x="3.4" y="7" width="6" height="5" fill="#2b2b2b" stroke="#fff" stroke-width="1.1"/><path d="M4.6 8.8h3.6M4.6 10.3h3.6" stroke="#fff" stroke-width="0.7"/></svg>
<span class="t" style="font-size:7.9px;line-height:10.3px;color:#f4f4f4;transform:translate(520.30px,527.58px) scaleX(0.961) rotate(.05deg);text-shadow:0 0 .8px rgba(255,255,255,.85);">Imprimir</span>
<svg style="left:556px;top:524px" width="14" height="14" viewBox="0 0 14 14"><path d="M2.2 2.3l9.2 9.3M11.4 2.3l-9.2 9.3" stroke="#fff" stroke-width="2.3" fill="none"/></svg>
<span class="t" style="font-size:7.9px;line-height:10.3px;color:#f4f4f4;transform:translate(570.00px,527.58px) scaleX(0.863) rotate(.05deg);text-shadow:0 0 .8px rgba(255,255,255,.85);">Fechar</span>
<svg style="left:593px;top:538px" width="7" height="7" viewBox="0 0 7 7"><g fill="#b4b4b4"><rect x="4.6" y="0.6" width="1.2" height="1.2"/><rect x="2.6" y="2.6" width="1.2" height="1.2"/><rect x="4.6" y="2.6" width="1.2" height="1.2"/><rect x="0.6" y="4.6" width="1.2" height="1.2"/><rect x="2.6" y="4.6" width="1.2" height="1.2"/><rect x="4.6" y="4.6" width="1.2" height="1.2"/></g></svg>
</div>
</body></html>
